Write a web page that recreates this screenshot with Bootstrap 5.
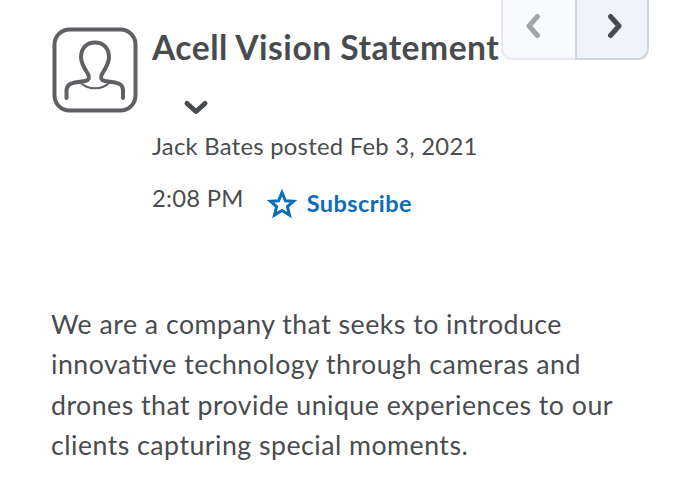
<!DOCTYPE html>
<html lang="en">
<head>
<meta charset="utf-8">
<meta name="viewport" content="width=device-width, initial-scale=1">
<title>Acell Vision Statement</title>
<link href="https://cdn.jsdelivr.net/npm/bootstrap@5.3.0/dist/css/bootstrap.min.css" rel="stylesheet">
<style>
body { font-family: Lato, sans-serif; color: #494c4e; background: #fff; overflow: hidden; font-feature-settings: "liga" 1; }
.post-head { padding-left: 52px; height: 303.6px; }
.avatar { width: 86px; height: 86px; margin-top: 27px; }
.post-info { width: 349px; margin-left: 14px; padding-top: 26px; }
.post-title { font-size: 33.6px; letter-spacing: .5px; line-height: 43px; font-weight: 700; margin: 0; }
.title-menu { height: 54px; padding: 30px 0 0 31px; border: 0; background: none; }
.meta { font-size: 23.8px; letter-spacing: .27px; line-height: 47px; }
.meta-time { line-height: 57px; }
.subscribe { color: #0a6db6; font-size: 23.5px; letter-spacing: .4px; line-height: 67px; font-weight: 700; text-decoration: none; margin-left: 22px; gap: 9px; }
.pager-btn { height: 60px; border: 2px solid #d0d6dd; border-top: 0; background: #f0f3f9; padding: 0 0 6px; border-radius: 0; }
.pager-prev { width: 75px; border-color: #e6eaf0; border-right: 0; background: #f9fafd; border-bottom-left-radius: 11px; padding-right: 14px; }
.pager-next { width: 74px; border-bottom-right-radius: 11px; padding-left: 6px; }
.post-body { padding-left: 51px; font-size: 26.7px; letter-spacing: .49px; line-height: 40.5px; }
</style>
</head>
<body>
<article>
  <header class="post-head d-flex align-items-start">
    <svg class="avatar flex-shrink-0" viewBox="0 0 86 86" fill="none" stroke="#5f6064" stroke-linecap="round">
      <rect x="2.500" y="2.500" width="81" height="81" rx="15" stroke-width="4"/>
      <path stroke-width="4" d="M14.500 71V64C14.500 58 18 56.500 23 55.500L33 54C37 53 38 51 36 47C32 41 29 36 29 30C29 21 35 15.500 43 15.500S57 21 57 30C57 36 54 41 50 47C48 51 49 53 53 54L63 55.500C68 56.500 71 58 71 64V71"/>
      <path stroke-width="1.800" d="M29 56C36 63 50 63 57 56"/>
    </svg>
    <div class="post-info flex-shrink-0">
      <h1 class="post-title text-nowrap">Acell Vision Statement</h1>
      <button class="title-menu d-flex" type="button" aria-label="Post actions">
        <svg width="26" height="17" viewBox="0 0 26 17" fill="none" stroke="#494c4e" stroke-width="5" stroke-linecap="round" stroke-linejoin="round"><path d="M4 4.500L13 12.500L22 4.500"/></svg>
      </button>
      <div class="meta text-nowrap">Jack Bates posted Feb 3, 2021</div>
      <div class="meta d-flex align-items-start text-nowrap">
        <span class="meta-time">2:08 PM</span>
        <a class="subscribe d-flex align-items-center" href="#">
          <svg width="32" height="32" viewBox="0 0 32 32" fill="none" stroke="#0a6db6" stroke-width="3" stroke-linejoin="miter" stroke-miterlimit="10"><path d="M16 4.500L19.400 12.700L27.500 13.300L21.400 18.600L23.500 27L16 22.500L8.500 27L10.600 18.600L4.500 13.300L12.600 12.700Z"/></svg>
          <span>Subscribe</span>
        </a>
      </div>
    </div>
    <nav class="btn-group flex-shrink-0" aria-label="Post navigation">
      <button class="btn pager-btn pager-prev d-flex align-items-center justify-content-center" type="button" aria-label="Previous">
        <svg width="16" height="28" viewBox="0 0 16 28" fill="none" stroke="#a3a4a6" stroke-width="5" stroke-linecap="round" stroke-linejoin="round"><path d="M12.500 4.500L4 14L12.500 23.500"/></svg>
      </button>
      <button class="btn pager-btn pager-next d-flex align-items-center justify-content-center" type="button" aria-label="Next">
        <svg width="16" height="28" viewBox="0 0 16 28" fill="none" stroke="#494c4e" stroke-width="5" stroke-linecap="round" stroke-linejoin="round"><path d="M3.500 4.500L12 14L3.500 23.500"/></svg>
      </button>
    </nav>
  </header>
  <p class="post-body text-nowrap mb-0">We are a company that seeks to introduce<br>innovative technology through cameras and<br>drones that provide unique experiences to our<br>clients capturing special moments.</p>
</article>
<script src="https://cdn.jsdelivr.net/npm/bootstrap@5.3.0/dist/js/bootstrap.bundle.min.js"></script>
</body>
</html>
